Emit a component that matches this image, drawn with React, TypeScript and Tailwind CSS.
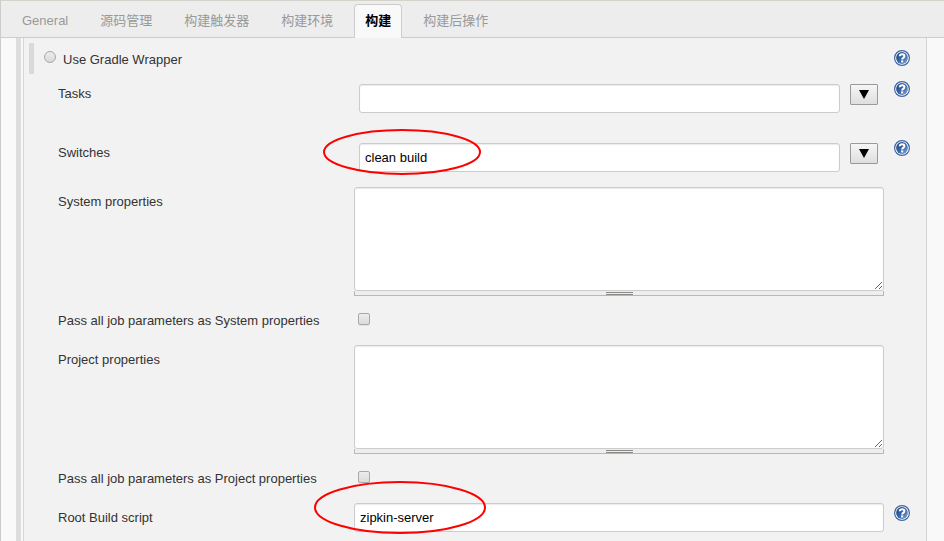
import { useId, type ReactNode } from 'react'

const tabs = ['General', '源码管理', '构建触发器', '构建环境', '构建', '构建后操作']
const activeTab = '构建'

const inputClass =
  'h-[29px] w-full rounded-[3px] border border-[#ccc] bg-white px-[5px] text-[13px] text-black shadow-[inset_0_1px_1px_rgba(0,0,0,0.08)] outline-none'

/* ---------- Help icon ---------- */

function HelpButton({ topic }: { topic: string }) {
  const gradient = useId()
  return (
    <button type="button" aria-label={`Help for feature: ${topic}`} className="block size-4 cursor-pointer">
      <svg width="16" height="16" viewBox="0 0 16 16">
        <defs>
          <linearGradient id={gradient} x1="0" y1="0" x2="1" y2="1">
            <stop offset="0.15" stopColor="#204a87" />
            <stop offset="0.5" stopColor="#3a66a5" />
            <stop offset="1" stopColor="#86a9d6" />
          </linearGradient>
        </defs>
        <circle cx="8" cy="8" r="7.4" fill="#fff" stroke="#3a66a5" strokeWidth="1.2" />
        <circle cx="8" cy="8" r="5.9" fill={`url(#${gradient})`} />
        <path
          d="M5.7 6.3C5.8 4.7 6.8 4.2 8.1 4.2c1.4 0 2.3.7 2.3 1.8 0 .9-.6 1.4-1.2 1.8-.7.5-1 .8-1 1.6"
          fill="none"
          stroke="#fff"
          strokeWidth="2"
        />
        <rect x="7.1" y="10.4" width="2.1" height="2" fill="#fff" />
      </svg>
    </button>
  )
}

/* ---------- Red pen marks ---------- */

function Ellipse({ className, width, height }: { className: string; width: number; height: number }) {
  return (
    <svg
      aria-hidden
      width={width}
      height={height}
      className={`pointer-events-none absolute z-10 max-w-none ${className}`}
    >
      <ellipse
        cx={width / 2}
        cy={height / 2}
        rx={width / 2 - 1}
        ry={height / 2 - 1}
        fill="none"
        stroke="#fe0000"
        strokeWidth="2"
      />
    </svg>
  )
}

/* ---------- Form rows ---------- */

function Row({
  label,
  htmlFor,
  help,
  className = '',
  children,
}: {
  label: string
  htmlFor: string
  help?: boolean
  className?: string
  children: ReactNode
}) {
  return (
    <div className={`flex items-start ${className}`}>
      <div className="w-[330px] shrink-0 pt-[5px] pl-[34px]">
        <label htmlFor={htmlFor} className="block leading-5">
          {label}
        </label>
      </div>
      <div className="min-w-0 flex-1">{children}</div>
      <div className="w-[42px] shrink-0 pt-0.5 pl-[10px]">{help && <HelpButton topic={label} />}</div>
    </div>
  )
}

function ExpandableInput({ id, value, children }: { id: string; value?: string; children?: ReactNode }) {
  return (
    <div className="flex items-start gap-[10px] pt-[5px] pr-[6px] pl-[5px]">
      <div className="relative min-w-0 flex-1">
        <input id={id} type="text" defaultValue={value} className={inputClass} />
        {children}
      </div>
      <button
        type="button"
        aria-label="Expand"
        className="flex h-[21px] w-7 shrink-0 items-center justify-center rounded-[1px] border border-[#9a9a9a] bg-linear-to-b from-[#f6f6f6] to-[#dedede]"
      >
        <svg width="10" height="9" viewBox="0 0 10 9" fill="#000">
          <path d="M0 0h10L5 9z" />
        </svg>
      </button>
    </div>
  )
}

function ResizableTextarea({ id }: { id: string }) {
  return (
    <div>
      <textarea
        id={id}
        className="block h-[104px] w-full resize rounded-[3px] border border-[#ccc] bg-white px-[5px] py-1 shadow-[inset_0_1px_1px_rgba(0,0,0,0.08)] outline-none"
      />
      <div className="flex h-[5px] cursor-s-resize justify-center border border-t-0 border-[#b8b8b4] bg-[#eee] pt-px">
        <div className="h-[3px] w-[27px] border-y border-[#888a85]" />
      </div>
    </div>
  )
}

function Checkbox({ id }: { id: string }) {
  return (
    <div className="pt-[7px] pl-1">
      <input
        id={id}
        type="checkbox"
        className="block size-3 appearance-none rounded-[2px] border border-[#a8a8a8] bg-linear-to-b from-[#ececec] to-[#dcdcdc] shadow-[0_1px_0_rgba(0,0,0,0.06)]"
      />
    </div>
  )
}

/* ---------- Page ---------- */

export default function App() {
  return (
    <div className="flex min-h-screen flex-col border-t border-l border-t-[#d3d3cb] border-l-[#ccc] bg-[#f9f9f9] font-['Liberation_Sans','Noto_Sans_CJK_SC',sans-serif] text-[13px] text-[#333]">
      <nav className="flex h-[37px] shrink-0 items-end gap-[10px] border-b border-[#ccc] bg-[#ededed] pl-[10px]">
        {tabs.map((tab) => (
          <a
            key={tab}
            href="#"
            className={`-mb-px flex h-[34px] items-center rounded-t-[4px] border border-b-0 px-[10px] pb-0.5 leading-5 whitespace-nowrap ${
              tab === activeTab ? 'border-[#ccc] bg-[#f9f9f9] font-bold text-black' : 'border-transparent text-[#999]'
            }`}
          >
            {tab}
          </a>
        ))}
      </nav>

      <main className="flex flex-1 pr-[17px] pl-[15px]">
        <div className="mr-0.5 w-[5px] shrink-0 bg-[#ddd]" />
        <form className="min-w-0 flex-1 border-x border-[#d6d6d6] bg-[#f2f2f2] pb-2">
          <div className="flex items-start pt-[5px] pl-[5px]">
            <div className="h-[31px] w-[5px] bg-[#d9d9d9]" />
            <div className="flex flex-1 gap-[7px] pt-[7px] pl-[10px]">
              <input
                id="wrapper"
                type="radio"
                name="useWrapper"
                className="mt-px size-3 appearance-none rounded-full border border-[#a8a8a8] bg-linear-to-b from-[#ececec] to-[#dadada]"
              />
              <label htmlFor="wrapper" className="leading-5">
                Use Gradle Wrapper
              </label>
            </div>
            <div className="w-[42px] shrink-0 pt-[7px] pl-[10px]">
              <HelpButton topic="Use Gradle Wrapper" />
            </div>
          </div>

          <Row label="Tasks" htmlFor="tasks" help className="mt-[5px] h-[59px]">
            <ExpandableInput id="tasks" />
          </Row>
          <Row label="Switches" htmlFor="switches" help className="h-[49px]">
            <ExpandableInput id="switches" value="clean build">
              <Ellipse width={158} height={46} className="-top-[14px] -left-[36px]" />
            </ExpandableInput>
          </Row>
          <Row label="System properties" htmlFor="systemProps" className="mb-[10px]">
            <ResizableTextarea id="systemProps" />
          </Row>
          <Row label="Pass all job parameters as System properties" htmlFor="passSystem" className="h-[39px]">
            <Checkbox id="passSystem" />
          </Row>
          <Row label="Project properties" htmlFor="projectProps" className="mb-[10px]">
            <ResizableTextarea id="projectProps" />
          </Row>
          <Row label="Pass all job parameters as Project properties" htmlFor="passProject" className="h-[39px]">
            <Checkbox id="passProject" />
          </Row>
          <Row label="Root Build script" htmlFor="rootBuild" help>
            <div className="relative">
              <input id="rootBuild" type="text" defaultValue="zipkin-server" className={inputClass} />
              <Ellipse width={172} height={53} className="-top-[22px] -left-[40px]" />
            </div>
          </Row>
        </form>
      </main>
    </div>
  )
}
